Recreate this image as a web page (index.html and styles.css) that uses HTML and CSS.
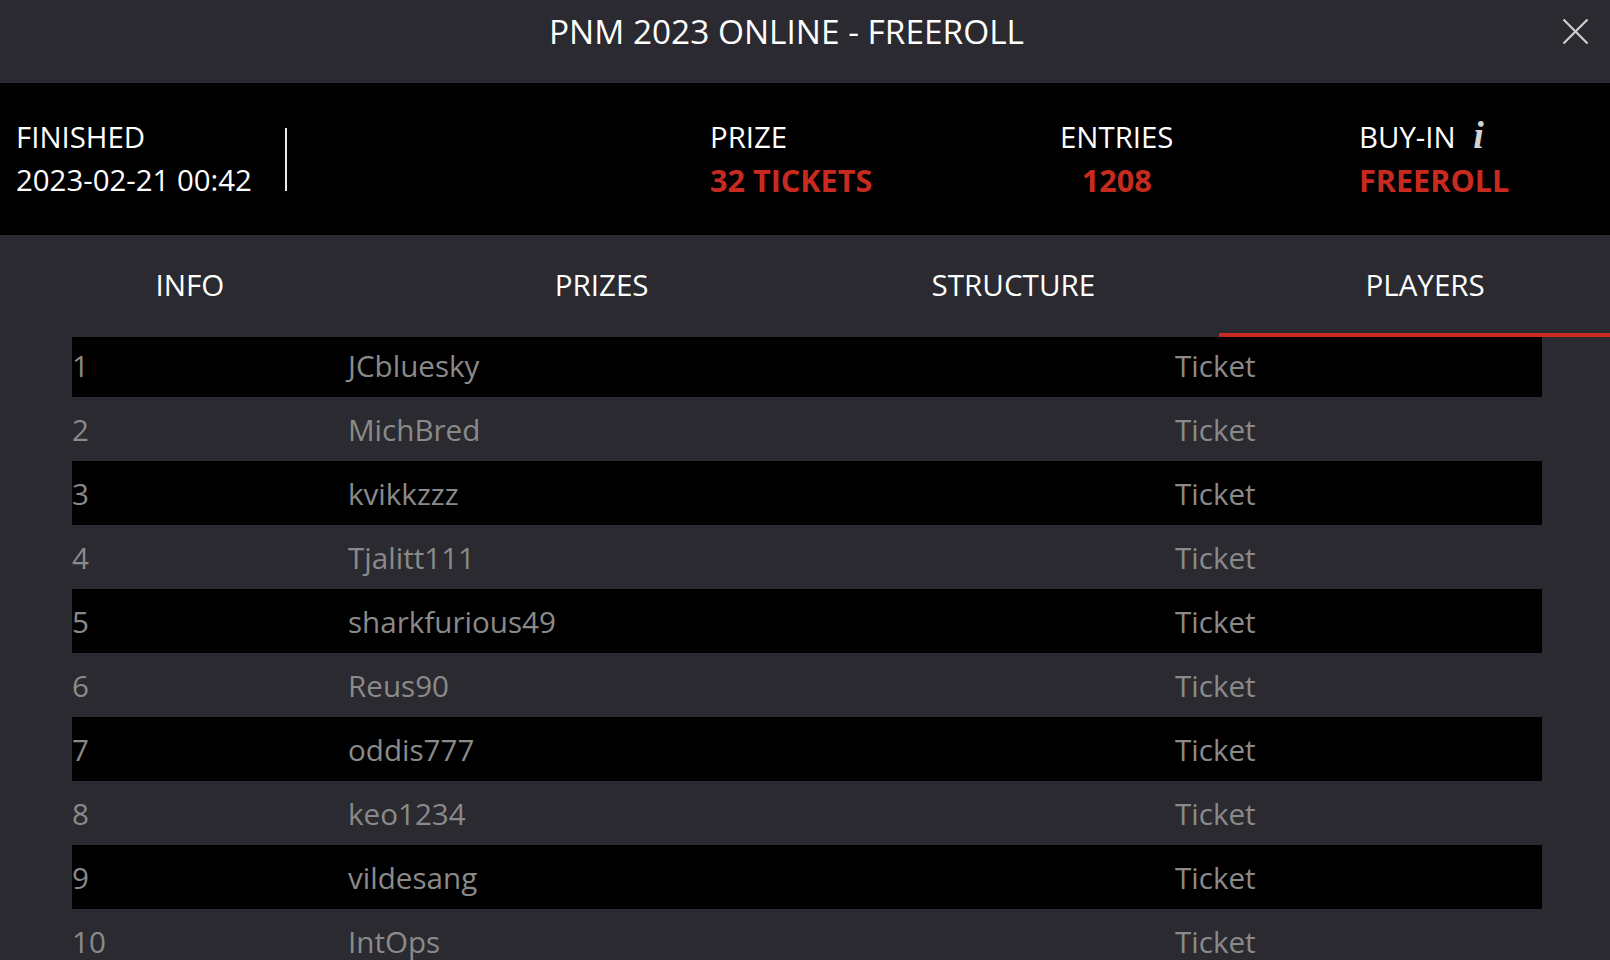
FILE: index.html
```html
<!DOCTYPE html>
<html lang="en">
<head>
<meta charset="utf-8">
<title>PNM 2023 ONLINE - FREEROLL</title>
<link rel="stylesheet" href="styles.css">
</head>
<body>
<div class="modal">
  <header class="topbar">
    <h1 class="title">PNM 2023 ONLINE - FREEROLL</h1>
    <button class="close" aria-label="Close">
      <svg width="27" height="27" viewBox="0 0 27 27"><path d="M1.5 1.5 L25.5 25.5 M25.5 1.5 L1.5 25.5" stroke="#cfcfcf" stroke-width="2.2" fill="none"/></svg>
    </button>
  </header>

  <section class="summary">
    <div class="status">
      <div class="label">FINISHED</div>
      <div class="label">2023-02-21 00:42</div>
    </div>
    <div class="divider"></div>
    <div class="stats">
      <div class="stat">
        <div class="label">PRIZE</div>
        <div class="value">32 TICKETS</div>
      </div>
      <div class="stat stat-center">
        <div class="label">ENTRIES</div>
        <div class="value">1208</div>
      </div>
      <div class="stat">
        <div class="label">BUY-IN <span class="info-i">i</span></div>
        <div class="value">FREEROLL</div>
      </div>
    </div>
  </section>

  <nav class="tabs">
    <div class="tab">INFO</div>
    <div class="tab">PRIZES</div>
    <div class="tab">STRUCTURE</div>
    <div class="tab active">PLAYERS</div>
  </nav>

  <div class="players">
    <div class="row"><span>1</span><span>JCbluesky</span><span>Ticket</span></div>
    <div class="row"><span>2</span><span>MichBred</span><span>Ticket</span></div>
    <div class="row"><span>3</span><span>kvikkzzz</span><span>Ticket</span></div>
    <div class="row"><span>4</span><span>Tjalitt111</span><span>Ticket</span></div>
    <div class="row"><span>5</span><span>sharkfurious49</span><span>Ticket</span></div>
    <div class="row"><span>6</span><span>Reus90</span><span>Ticket</span></div>
    <div class="row"><span>7</span><span>oddis777</span><span>Ticket</span></div>
    <div class="row"><span>8</span><span>keo1234</span><span>Ticket</span></div>
    <div class="row"><span>9</span><span>vildesang</span><span>Ticket</span></div>
    <div class="row"><span>10</span><span>IntOps</span><span>Ticket</span></div>
  </div>
</div>
</body>
</html>
```

FILE: styles.css
```css
* { box-sizing: border-box; }

html, body {
  margin: 0;
  padding: 0;
  height: 100%;
  overflow: hidden;
  background: #2a2a30;
}

body {
  font-family: "Open Sans", "Noto Sans", sans-serif;
  color: #fff;
}

.modal {
  width: 1610px;
  height: 960px;
  overflow: hidden;
  background: #2a2a30;
}

.topbar {
  height: 83px;
  display: flex;
  align-items: flex-start;
  padding: 0 21px 0 11px;
  background: #2a2a30;
}

.title {
  flex: 1;
  margin: 0;
  text-align: center;
  font-size: 33.4px;
  font-weight: 400;
  line-height: 63px;
  color: #fff;
}

.close {
  width: 27px;
  height: 63px;
  padding: 0;
  border: 0;
  background: none;
  display: flex;
  align-items: center;
  justify-content: center;
}

.close svg { display: block; }

.summary {
  height: 152px;
  background: #000;
  display: flex;
  align-items: center;
}

.status {
  width: 285px;
  padding-left: 16px;
}

.label {
  font-size: 29.4px;
  line-height: 43.5px;
  color: #fff;
  white-space: nowrap;
}

.divider {
  width: 2px;
  height: 63px;
  background: #e8e8e8;
}

.stats {
  margin-left: 423px;
  display: grid;
  grid-template-columns: 350px 299px auto;
  justify-items: start;
}

.stat {
  display: flex;
  flex-direction: column;
}

.stat-center { align-items: center; }

.value {
  font-size: 30.6px;
  font-weight: 700;
  line-height: 43.5px;
  color: #c92a20;
  white-space: nowrap;
}

.info-i {
  font-family: "Liberation Serif", "DejaVu Serif", serif;
  font-style: italic;
  font-weight: 700;
  font-size: 38px;
  line-height: 0;
  color: #d4d4d4;
  margin-left: 10px;
}

.tabs {
  position: relative;
  z-index: 1;
  display: flex;
  margin: 0 -21px 0 -16px;
  height: 102px;
  background: #2a2a30;
}

.tab {
  flex: 1;
  display: flex;
  align-items: center;
  justify-content: center;
  font-size: 29.6px;
  color: #fff;
  border-bottom: 4px solid transparent;
}

.tab.active { border-bottom-color: #c92a20; }

.players {
  margin: -4px 68px 0 72px;
}

.row {
  display: grid;
  grid-template-columns: 276px 827px 1fr;
  align-items: center;
  height: 64px;
  font-size: 29.6px;
  color: #8a8a8a;
  white-space: nowrap;
}

.row:nth-child(odd) { background: #000; }
```
